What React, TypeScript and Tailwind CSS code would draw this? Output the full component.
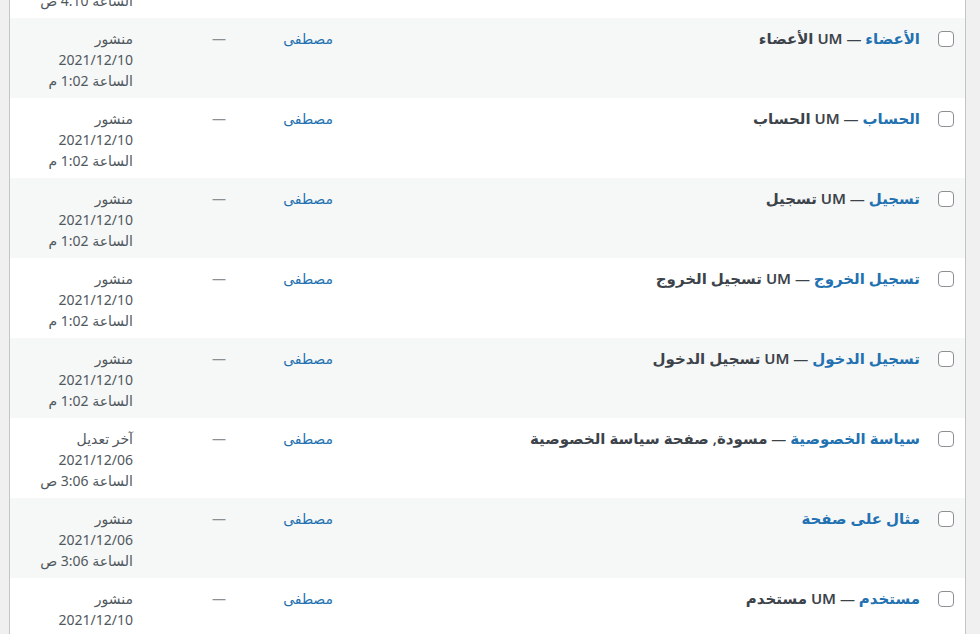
import React from "react";

type Row = {
  title: string;
  state?: string;
  status: string;
  date: string;
  time: string;
};

const rows: Row[] = [
  { title: "الأعضاء", state: "UM الأعضاء", status: "منشور", date: "2021/12/10", time: "الساعة 1:02 م" },
  { title: "الحساب", state: "UM الحساب", status: "منشور", date: "2021/12/10", time: "الساعة 1:02 م" },
  { title: "تسجيل", state: "UM تسجيل", status: "منشور", date: "2021/12/10", time: "الساعة 1:02 م" },
  { title: "تسجيل الخروج", state: "UM تسجيل الخروج", status: "منشور", date: "2021/12/10", time: "الساعة 1:02 م" },
  { title: "تسجيل الدخول", state: "UM تسجيل الدخول", status: "منشور", date: "2021/12/10", time: "الساعة 1:02 م" },
  { title: "سياسة الخصوصية", state: "مسودة, صفحة سياسة الخصوصية", status: "آخر تعديل", date: "2021/12/06", time: "الساعة 3:06 ص" },
  { title: "مثال على صفحة", status: "منشور", date: "2021/12/06", time: "الساعة 3:06 ص" },
  { title: "مستخدم", state: "UM مستخدم", status: "منشور", date: "2021/12/10", time: "الساعة 1:02 م" },
];

function TableRow({ row, striped }: { row: Row; striped: boolean }) {
  return (
    <div className={`flex h-[80px] shrink-0 ${striped ? "bg-[#f6f7f7]" : "bg-white"}`}>
      <div className="w-[45px] shrink-0 pr-[11px] pt-[13px]">
        <div className="h-[16px] w-[16px] rounded-[4px] border border-[#8c8f94] bg-white" />
      </div>
      <div className="flex-1 pt-[10px] text-[15px] leading-[21px] font-semibold">
        <a className="text-[#2271b1]">{row.title}</a>
        {row.state && <span className="text-[#3c434a]"> — {row.state}</span>}
      </div>
      <div className="w-[96px] shrink-0 pr-[10px] pt-[10px] text-[14px] leading-[21px] text-[#2271b1]">
        مصطفى
      </div>
      <div className="w-[104px] shrink-0 pr-[21px] pt-[10px] text-[14px] leading-[21px] text-[#8c8f94]">
        —
      </div>
      <div className="w-[133px] shrink-0 pr-[10px] pt-[10px] text-[14px] leading-[21px] text-[#50575e]">
        <div>{row.status}</div>
        <div>{row.date}</div>
        <div>{row.time}</div>
      </div>
    </div>
  );
}

export default function App() {
  return (
    <div
      dir="rtl"
      className="h-[634px] w-[980px] overflow-hidden bg-[#f0f0f1]"
      style={{ fontFamily: '"Noto Sans", "DejaVu Sans", sans-serif' }}
    >
      <div className="ml-[9px] mr-[14px] -mt-[62px] flex flex-col border-x border-[#c3c4c7] bg-white">
        <div className="flex h-[80px] shrink-0 bg-white">
          <div className="w-[45px] shrink-0" />
          <div className="flex-1" />
          <div className="w-[96px] shrink-0" />
          <div className="w-[104px] shrink-0" />
          <div className="w-[133px] shrink-0 pr-[10px] pt-[10px] text-[14px] leading-[21px] text-[#50575e]">
            <div>منشور</div>
            <div>2021/12/10</div>
            <div>الساعة 4:10 ص</div>
          </div>
        </div>
        {rows.map((r, i) => (
          <TableRow key={i} row={r} striped={i % 2 === 0} />
        ))}
      </div>
    </div>
  );
}
